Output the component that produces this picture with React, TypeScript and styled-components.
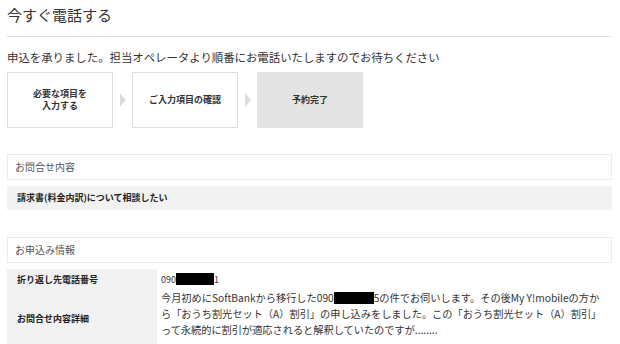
import React from "react"
import styled, { createGlobalStyle } from "styled-components"

const GlobalStyle = createGlobalStyle`
  body {
    margin: 0;
    background: #fff;
    color: #333;
    font-family: "Noto Sans CJK JP", "Noto Sans", sans-serif;
  }
`

const Page = styled.div`
  width: 605px;
  padding-left: 7px;
`

const Title = styled.h1`
  margin: 0;
  padding: 5px 0 11px;
  font-size: 15px;
  font-weight: normal;
  line-height: 20px;
  color: #333;
  border-bottom: 1px solid #e2e2e2;
`

const Lead = styled.p`
  margin: 12px 0 0;
  font-size: 11.4px;
  line-height: 16px;
  color: #333;
`

const Steps = styled.div`
  display: flex;
  align-items: center;
  margin-top: 7px;
`

const Step = styled.div<{ $current?: boolean }>`
  box-sizing: border-box;
  width: 106px;
  height: 56px;
  display: flex;
  align-items: center;
  justify-content: center;
  text-align: center;
  font-size: 9px;
  font-weight: bold;
  line-height: 12px;
  color: #333;
  background: ${p => (p.$current ? "#e4e4e4" : "#fff")};
  border: 1px solid ${p => (p.$current ? "#e4e4e4" : "#dedede")};
`

const Arrow = styled.div`
  width: 19px;
  display: flex;
  justify-content: center;
  &::before {
    content: "";
    border-left: 6px solid #dcdcdc;
    border-top: 7px solid transparent;
    border-bottom: 7px solid transparent;
  }
`

const SectionHead = styled.div<{ $gap: number }>`
  box-sizing: border-box;
  margin-top: ${p => p.$gap}px;
  height: 26px;
  padding-left: 7px;
  border: 1px solid #ebebeb;
  font-size: 10px;
  line-height: 24px;
  color: #555;
`

const Answer = styled.div`
  margin-top: 6px;
  height: 24px;
  padding-left: 10px;
  background: #f2f2f2;
  font-size: 9px;
  font-weight: bold;
  line-height: 24px;
  color: #222;
`

const Table = styled.div`
  display: grid;
  grid-template-columns: 150px 1fr;
  margin-top: 6px;
`

const Label = styled.div`
  display: flex;
  align-items: center;
  padding-left: 10px;
  background: #f2f2f2;
  font-size: 9px;
  font-weight: bold;
  color: #222;
`

const Value = styled.div<{ $small?: boolean }>`
  padding: ${p => (p.$small ? "0" : "0 0 8px")} 4px;
  height: ${p => (p.$small ? "21px" : "auto")};
  display: flex;
  align-items: center;
  font-size: ${p => (p.$small ? "9px" : "10.2px")};
  line-height: ${p => (p.$small ? "21px" : "16px")};
  color: #333;
  white-space: nowrap;
`

const Redacted = styled.span<{ $w: number }>`
  display: inline-block;
  width: ${p => p.$w}px;
  height: 12px;
  background: #000;
  vertical-align: -2px;
`

export default function App() {
  return (
    <Page>
      <GlobalStyle />
      <Title>今すぐ電話する</Title>
      <Lead>申込を承りました。担当オペレータより順番にお電話いたしますのでお待ちください</Lead>

      <Steps>
        <Step>
          必要な項目を
          <br />
          入力する
        </Step>
        <Arrow />
        <Step>ご入力項目の確認</Step>
        <Arrow />
        <Step $current>予約完了</Step>
      </Steps>

      <SectionHead $gap={26}>お問合せ内容</SectionHead>
      <Answer>請求書(料金内訳)について相談したい</Answer>

      <SectionHead $gap={27}>お申込み情報</SectionHead>
      <Table>
        <Label>折り返し先電話番号</Label>
        <Value $small>
          <span>
            090
            <Redacted $w={38} />1
          </span>
        </Value>
        <Label>お問合せ内容詳細</Label>
        <Value>
          <span>
            今月初めにSoftBankから移行した090
            <Redacted $w={40} />
            5の件でお伺いします。その後My Y!mobileの方か
            <br />
            ら「おうち割光セット（A）割引」の申し込みをしました。この「おうち割光セット（A）割引」
            <br />
            って永続的に割引が適応されると解釈していたのですが........
          </span>
        </Value>
      </Table>
    </Page>
  )
}
